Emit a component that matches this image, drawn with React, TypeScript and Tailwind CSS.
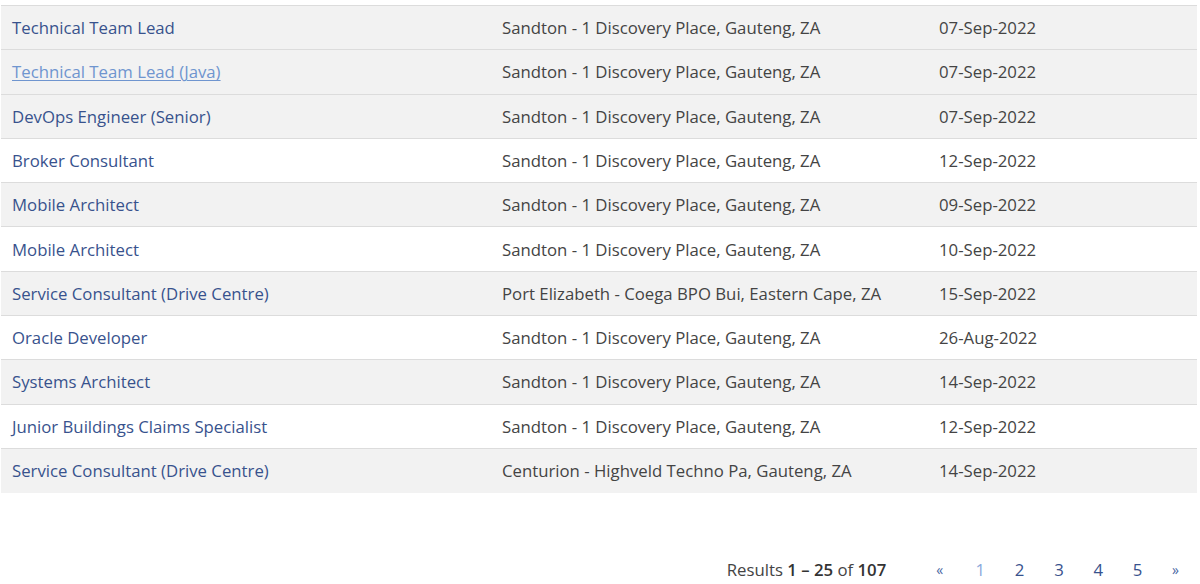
const jobs = [
  { title: "Technical Team Lead", location: "Sandton - 1 Discovery Place, Gauteng, ZA", date: "07-Sep-2022" },
  { title: "Technical Team Lead (Java)", location: "Sandton - 1 Discovery Place, Gauteng, ZA", date: "07-Sep-2022", hover: true },
  { title: "DevOps Engineer (Senior)", location: "Sandton - 1 Discovery Place, Gauteng, ZA", date: "07-Sep-2022" },
  { title: "Broker Consultant", location: "Sandton - 1 Discovery Place, Gauteng, ZA", date: "12-Sep-2022" },
  { title: "Mobile Architect", location: "Sandton - 1 Discovery Place, Gauteng, ZA", date: "09-Sep-2022" },
  { title: "Mobile Architect", location: "Sandton - 1 Discovery Place, Gauteng, ZA", date: "10-Sep-2022" },
  { title: "Service Consultant (Drive Centre)", location: "Port Elizabeth - Coega BPO Bui, Eastern Cape, ZA", date: "15-Sep-2022" },
  { title: "Oracle Developer", location: "Sandton - 1 Discovery Place, Gauteng, ZA", date: "26-Aug-2022" },
  { title: "Systems Architect", location: "Sandton - 1 Discovery Place, Gauteng, ZA", date: "14-Sep-2022" },
  { title: "Junior Buildings Claims Specialist", location: "Sandton - 1 Discovery Place, Gauteng, ZA", date: "12-Sep-2022" },
  { title: "Service Consultant (Drive Centre)", location: "Centurion - Highveld Techno Pa, Gauteng, ZA", date: "14-Sep-2022" },
];

const pages = ["1", "2", "3", "4", "5"];

export default function App() {
  return (
    <div className="w-[1200px] h-[584px] bg-white overflow-hidden font-['Open_Sans',sans-serif] text-[16.75px] text-[#444]">
      <div className="pt-[5px] pl-[1px] pr-[3px]">
        <table className="w-full border-collapse">
          <tbody>
            {jobs.map((job, i) => (
              <tr
                key={i}
                className={`h-[44.3px] border-t-[1.5px] border-[#dcdcdc] ${i % 2 === 0 || job.hover ? "bg-[#f2f2f2]" : "bg-white"}`}
              >
                <td className="w-[490px] pl-[11px] align-middle">
                  <a
                    href="#"
                    className={job.hover ? "text-[#6f95cf] underline underline-offset-2" : "text-[#38528d]"}
                  >
                    {job.title}
                  </a>
                </td>
                <td className="w-[437px] pl-[11px] align-middle">{job.location}</td>
                <td className="pl-[11px] align-middle">{job.date}</td>
              </tr>
            ))}
          </tbody>
        </table>
      </div>
      <div className="flex items-center justify-end pt-[64px] pr-[21px]">
        <span className="mr-[50px]">
          Results <span className="font-semibold text-[#333]">1 – 25</span> of{" "}
          <span className="font-semibold text-[#333]">107</span>
        </span>
        <div className="flex items-center">
          <a href="#" className="w-[39.3px] text-[14px] text-[#4a67a3]">«</a>
          {pages.map((p) => (
            <a
              key={p}
              href="#"
              className={`w-[39.3px] ${p === "1" ? "text-[#8aa9dc]" : "text-[#38528d]"}`}
            >
              {p}
            </a>
          ))}
          <a href="#" className="text-[14px] text-[#4a67a3]">»</a>
        </div>
      </div>
    </div>
  );
}
